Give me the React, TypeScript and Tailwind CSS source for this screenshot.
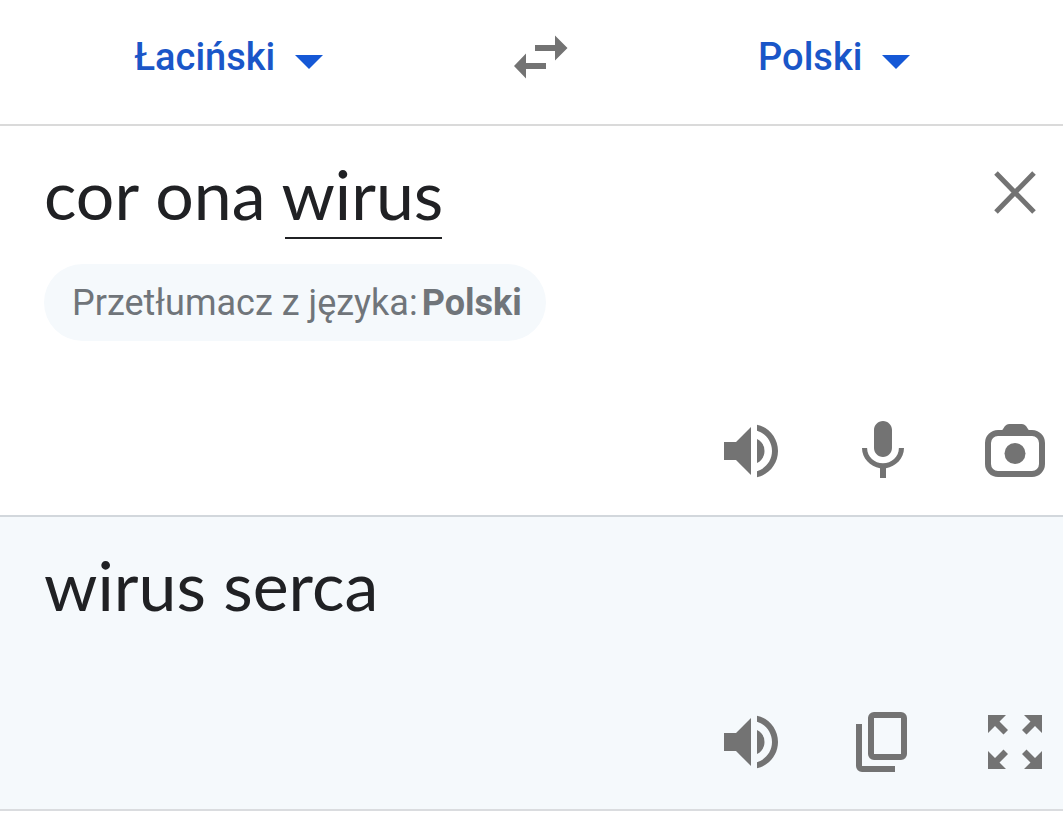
import { useState } from "react";
import { MdMic, MdVolumeUp } from "react-icons/md";

const LANGUAGES = ["Łaciński", "Polski", "Angielski", "Niemiecki"];

function LanguageSelect({ label, value, onChange }: any) {
  return (
    <div className="flex flex-1 justify-center">
      <div className="relative">
        <select
          aria-label={label}
          value={value}
          onChange={(e) => onChange(e.target.value)}
          className="block h-14 appearance-none field-sizing-content bg-transparent pr-12
                     font-[Roboto,sans-serif] text-[38px] leading-[56px] font-medium
                     text-[#1a56c8] focus:outline-none"
        >
          {LANGUAGES.map((name) => (
            <option key={name}>{name}</option>
          ))}
        </select>
        <svg
          viewBox="0 0 28 14"
          className="pointer-events-none absolute top-[26px] right-0 h-3.5 w-7 fill-[#1558d6]"
        >
          <path d="M0 0h28L14 14z" />
        </svg>
      </div>
    </div>
  );
}

function IconButton({ label, onClick, children }: any) {
  return (
    <button
      type="button"
      aria-label={label}
      onClick={onClick}
      className="size-18 shrink-0 text-[#737373]"
    >
      {children}
    </button>
  );
}

function SwapIcon() {
  return (
    <svg viewBox="0 0 54 44" className="h-11 w-[54px] fill-[#737373]">
      <path d="M21 10h20V.5L53.5 13 41 25.5V16H21z" />
      <path d="M32 28H12v-9.5L0 31l12 12.5V34h20z" />
    </svg>
  );
}

function CloseIcon() {
  return (
    <svg viewBox="0 0 72 72" className="size-18" stroke="currentColor" strokeWidth="5">
      <path d="M17 17l38 39M55 17L17 56" />
    </svg>
  );
}

function CameraIcon() {
  return (
    <svg viewBox="0 0 72 72" className="size-18">
      <rect
        x="9"
        y="18"
        width="54"
        height="41"
        rx="10"
        fill="none"
        stroke="currentColor"
        strokeWidth="6"
      />
      <path d="M22 17l4-6q2-2 4-2h13q2 0 4 2l4 6z" fill="currentColor" />
      <circle cx="36" cy="38.5" r="10.5" fill="currentColor" />
    </svg>
  );
}

function CopyIcon() {
  return (
    <svg
      viewBox="0 0 72 72"
      className="size-18"
      fill="none"
      stroke="currentColor"
      strokeWidth="6"
    >
      <rect x="24" y="9" width="33" height="42" rx="3" />
      <path d="M12 18v42a3 3 0 0 0 3 3h33" />
    </svg>
  );
}

function ExpandIcon() {
  return (
    <svg viewBox="0 0 72 72" className="size-18" fill="currentColor">
      <path d="M9 9h18l-6.5 6.5 8.5 8.5-4.5 4.5-8.5-8.5L9 27z" />
      <path d="M63 9H45l6.5 6.5L43 24l4.5 4.5L56 20l7 7z" />
      <path d="M9 63h18l-6.5-6.5L29 48l-4.5-4.5L16 52l-7-7z" />
      <path d="M63 63H45l6.5-6.5L43 48l4.5-4.5L56 52l7-7z" />
    </svg>
  );
}

export default function App() {
  const [from, setFrom] = useState("Łaciński");
  const [to, setTo] = useState("Polski");
  const [text, setText] = useState("cor ona wirus");

  const swap = () => {
    setFrom(to);
    setTo(from);
  };

  return (
    <main className="min-h-screen bg-white font-[Roboto,sans-serif]">
      {/* Languages */}
      <header className="flex border-b-2 border-[#dadada] pt-[29px] pb-[39px]">
        <LanguageSelect label="Język źródłowy" value={from} onChange={setFrom} />
        <button
          type="button"
          aria-label="Zamień języki"
          onClick={swap}
          className="flex h-14 w-37 items-center justify-center pl-4.5"
        >
          <SwapIcon />
        </button>
        <LanguageSelect label="Język docelowy" value={to} onChange={setTo} />
      </header>

      {/* Source text */}
      <section className="border-b-2 border-[#d2d7dc] pt-[30px] pr-3 pb-7 pl-11">
        <div className="flex">
          <div className="relative flex-1">
            <textarea
              aria-label="Tekst źródłowy"
              rows={1}
              spellCheck={false}
              value={text}
              onChange={(e) => setText(e.target.value)}
              className="block h-19 w-full resize-none overflow-hidden font-[Lato,sans-serif]
                         text-[68px] leading-[76px] text-[#202124] focus:outline-none"
            />
            {text === "cor ona wirus" && (
              <span className="absolute top-[81px] left-[241px] h-0.5 w-[157px] bg-[#202124]" />
            )}
          </div>
          <IconButton label="Wyczyść" onClick={() => setText("")}>
            <CloseIcon />
          </IconButton>
        </div>

        <button
          type="button"
          className="mt-8 flex h-[77px] items-center gap-1 rounded-full bg-[#f5f9fc] pr-6 pl-7
                     text-[36px] text-[#70757a]"
        >
          Przetłumacz z języka:
          <b className="font-bold">Polski</b>
        </button>

        <div className="mt-[74px] flex justify-end gap-15">
          <IconButton label="Odsłuchaj">
            <MdVolumeUp className="size-18" />
          </IconButton>
          <IconButton label="Mów">
            <MdMic className="size-18" />
          </IconButton>
          <IconButton label="Aparat">
            <CameraIcon />
          </IconButton>
        </div>
      </section>

      {/* Translation */}
      <section className="border-b-2 border-[#dadcdf] bg-[#f5f9fc] pt-[30px] pr-3 pb-[31px] pl-11">
        <p className="font-[Lato,sans-serif] text-[68px] leading-[76px] text-[#202124]">
          wirus serca
        </p>

        <div className="mt-[83px] flex justify-end gap-15">
          <IconButton label="Odsłuchaj tłumaczenie">
            <MdVolumeUp className="size-18" />
          </IconButton>
          <IconButton label="Kopiuj">
            <CopyIcon />
          </IconButton>
          <IconButton label="Pełny ekran">
            <ExpandIcon />
          </IconButton>
        </div>
      </section>
    </main>
  );
}
